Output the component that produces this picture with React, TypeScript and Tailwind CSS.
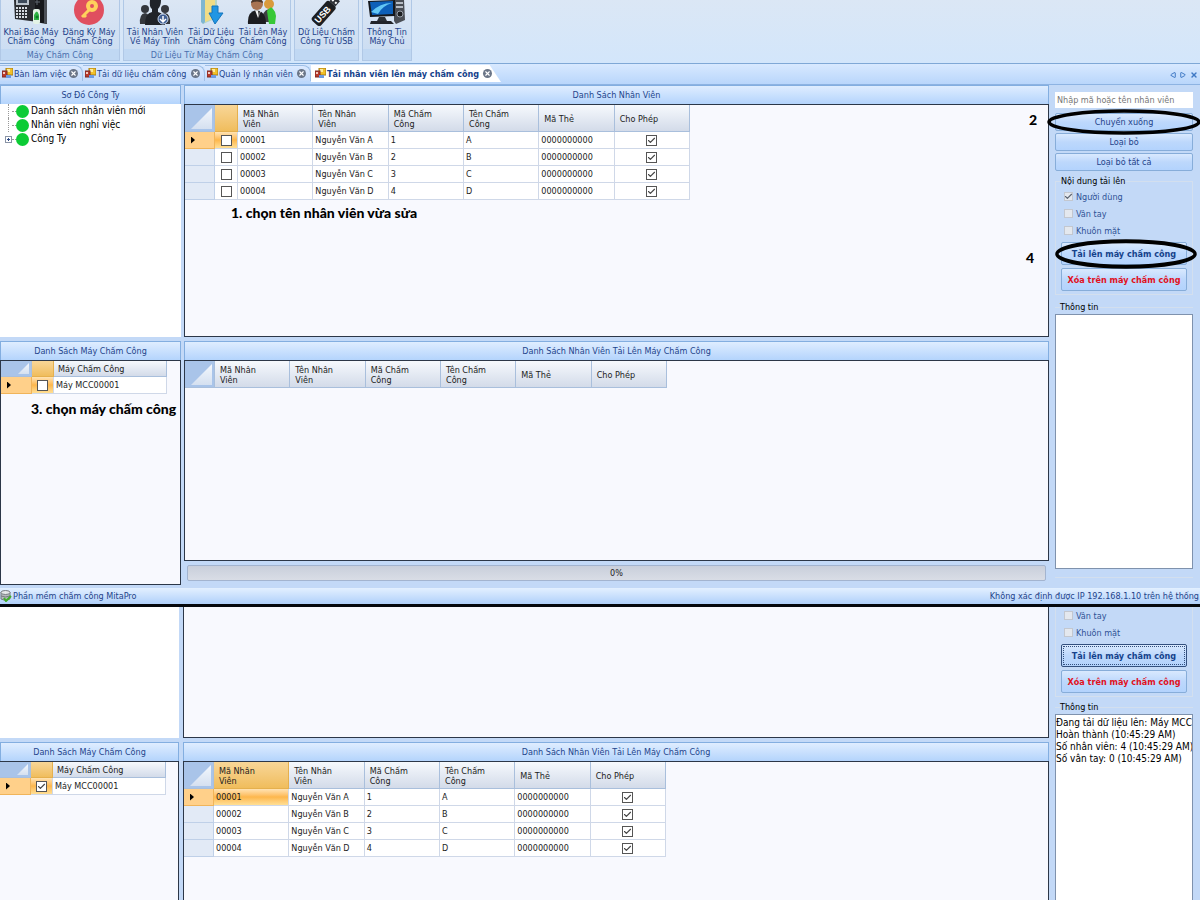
import React from 'react';
import clsx from 'clsx';
import { Check, X, Triangle } from 'lucide-react';

interface Employee {
  code: string;
  name: string;
  deviceId: string;
  deviceName: string;
  card: string;
}

const employees: Employee[] = [
  { code: '00001', name: 'Nguyễn Văn A', deviceId: '1', deviceName: 'A', card: '0000000000' },
  { code: '00002', name: 'Nguyễn Văn B', deviceId: '2', deviceName: 'B', card: '0000000000' },
  { code: '00003', name: 'Nguyễn Văn C', deviceId: '3', deviceName: 'C', card: '0000000000' },
  { code: '00004', name: 'Nguyễn Văn D', deviceId: '4', deviceName: 'D', card: '0000000000' },
];

const columns = ['Mã Nhân Viên', 'Tên Nhân Viên', 'Mã Chấm Công', 'Tên Chấm Công', 'Mã Thẻ', 'Cho Phép'];

const uploadLog = [
  'Đang tải dữ liệu lên: Máy MCC00001',
  'Hoàn thành (10:45:29 AM)',
  'Số nhân viên: 4 (10:45:29 AM)',
  'Số vân tay: 0 (10:45:29 AM)',
].join('\n');

/* ---------- Icons ---------- */

function DeviceIcon() {
  return (
    <svg width="36" height="26" viewBox="0 0 36 26">
      <path d="M1 0h24v22L2 19z" fill="#2a2d31" />
      <path d="M22 0h12v24l-12-2z" fill="#16181b" />
      <path d="M31 0h3v24l-3-1z" fill="#4b5057" />
      <path d="M3 0h13v5H3z" fill="#b9c2cb" />
      <path d="M5 0h9v3H5z" fill="#3c4a5a" />
      {[7, 10, 13, 16].map((y) =>
        [3, 6, 9, 12].map((x) => <rect key={`${x}-${y}`} x={x} y={y} width="2" height="2" fill="#d7dce2" />),
      )}
      <rect x="20" y="9" width="7" height="15" rx="2" fill="#e3f3e6" />
      <path d="M21 15q3-7 5 0v5h-5z" fill="#2fb344" />
      <circle cx="24" cy="17" r="1.5" fill="#0e7d29" />
      <path d="M22 2h5M24 0v5" stroke="#5e666f" />
    </svg>
  );
}

function KeyIcon() {
  return (
    <svg width="32" height="26" viewBox="0 0 32 26">
      <circle cx="16" cy="10" r="15" fill="#e04f5f" />
      <circle cx="19" cy="6" r="4" fill="none" stroke="#ffd15c" strokeWidth="4" />
      <path d="M16 10 9 17M10 14l3 3" stroke="#ffd15c" strokeWidth="3" fill="none" />
    </svg>
  );
}

function PeopleIcon() {
  return (
    <svg width="32" height="26" viewBox="0 0 32 26">
      <g fill="#34373d">
        <circle cx="6" cy="9" r="4" />
        <circle cx="26" cy="9" r="4" />
        <path d="M1 24q-1-10 5-11 5 0 6 11zM20 24q0-10 6-11 6 1 5 11z" />
      </g>
      <path d="M6 25q0-12 7-13V9q-3-2-2-9h11q0 6-3 9v3q7 1 7 13z" fill="#202329" />
      <circle cx="24" cy="19" r="5" fill="#3e5d92" stroke="#c8d8ef" />
      <path d="M24 16v6M21 19l3 3 3-3" stroke="#fff" strokeWidth="1.5" fill="none" />
    </svg>
  );
}

function FolderDownIcon() {
  return (
    <svg width="26" height="26" viewBox="0 0 26 26">
      <path d="M3 0h16v18L5 24z" fill="#b7d5c5" />
      <path d="M7 0h10v18l-10 4z" fill="#f0dc86" />
      <path d="M3 0h4v22l-2 2-2-2z" fill="#7fb6d1" />
      <path d="M14 6h6v7h5l-8 11-6-11h3z" fill="#2196e3" stroke="#1374bd" />
    </svg>
  );
}

function BusinessIcon() {
  return (
    <svg width="32" height="26" viewBox="0 0 32 26">
      <circle cx="22" cy="4" r="5" fill="#d99a3c" />
      <path d="M15 22q0-12 7-13 6 1 6 13z" fill="#3d3f42" />
      <circle cx="10" cy="4" r="6" fill="#a87352" />
      <path d="M4 3q0-4 6-4 6 0 6 4-6-3-12 0z" fill="#4b372a" />
      <path d="M1 24Q0 12 9 10q10 1 10 14z" fill="#1c1d20" />
      <path d="M8 10l3 8 3-7z" fill="#f3f3f3" />
      <path d="M11 11l1 7 1-7z" fill="#333" />
      <path d="M20 11q4-6 6-2 3 3 3 7l-1 8h-6l-1-6z" fill="#37c837" />
    </svg>
  );
}

function UsbIcon() {
  return (
    <svg width="32" height="26" viewBox="0 0 32 26">
      <g transform="rotate(-48 14 12)">
        <rect x="-1" y="6" width="26" height="12" rx="3" fill="#1d1f22" />
        <rect x="25" y="8" width="7" height="8" fill="#2e3136" />
        <rect x="27" y="9" width="2" height="2" fill="#fff" />
        <rect x="27" y="13" width="2" height="2" fill="#fff" />
        <text x="1" y="15" fontSize="9" fontWeight="700" fill="#fff" fontFamily="Liberation Sans, sans-serif">
          USB
        </text>
      </g>
    </svg>
  );
}

function ComputerIcon() {
  return (
    <svg width="38" height="26" viewBox="0 0 38 26">
      <path d="M26 0h10l1 20-9 4-2-3z" fill="#4a4e55" />
      <path d="M28 2h7v2h-7zM28 6h7v2h-7z" fill="#b6bcc4" />
      <circle cx="32" cy="14" r="3" fill="#1b1d20" stroke="#9aa1aa" />
      <path d="M0 1 27 0v16L2 17z" fill="#15181d" />
      <path d="M2 2 25 1v13L4 15z" fill="#0d5fb8" />
      <path d="M3 12q9-9 21-9-10 3-14 11z" fill="#63c7f5" />
      <path d="M11 17h6l2 4H9z" fill="#2c3036" />
      <path d="M3 21h20l3 3H2z" fill="#22252a" />
    </svg>
  );
}

function FormIcon() {
  return (
    <svg width="11" height="11" viewBox="0 0 11 11" className="shrink-0">
      <rect x="4" y="0" width="7" height="7" fill="#f2c029" stroke="#a37b16" />
      <rect x="5" y="1" width="3" height="3" fill="#fdeb9c" />
      <rect x="0" y="3" width="5" height="6" fill="#b93a2c" stroke="#7d2b25" />
      <rect x="1" y="4" width="2" height="2" fill="#f3c9c0" />
      <rect x="4" y="7" width="5" height="3" fill="#6d9ae0" />
    </svg>
  );
}

function DatabaseIcon() {
  return (
    <svg width="12" height="12" viewBox="0 0 12 12" className="shrink-0">
      <path d="M1 2v7q5 3 9 0V2z" fill="#b5b9bd" stroke="#777c81" />
      <ellipse cx="5.5" cy="2.5" rx="4.5" ry="2" fill="#e7e9eb" stroke="#777c81" />
      <path d="M1 6q4 2 9 0" stroke="#777c81" fill="none" />
      <path d="m4 8 2 3 5-5" stroke="#3fae2a" strokeWidth="2" fill="none" />
    </svg>
  );
}

/* ---------- Small controls ---------- */

function CheckBox({ checked, label, soft }: { checked?: boolean; label?: string; soft?: boolean }) {
  return (
    <span className="relative inline-flex shrink-0 align-middle">
      <input
        type="checkbox"
        defaultChecked={checked}
        aria-label={label}
        className={clsx(
          'peer appearance-none border',
          soft ? 'size-[9px] border-[#c3c7cf] bg-[#e4e8ee]' : 'size-[11px] border-[#555] bg-white',
        )}
      />
      <Check
        className={clsx(
          'pointer-events-none absolute inset-0 m-auto hidden size-[9px] peer-checked:block',
          soft ? 'text-[#5b6472]' : 'text-[#444]',
        )}
        strokeWidth={3}
      />
    </span>
  );
}

function PanelTitle({ children }: { children: React.ReactNode }) {
  return (
    <h2 className="h-[19px] shrink-0 border border-b-0 border-[#83aee0] bg-linear-to-b from-[#dfedff] to-[#b4d4fc] text-center leading-[19px] text-[#1f458c]">
      {children}
    </h2>
  );
}

function ActionButton({ children, className }: { children: React.ReactNode; className?: string }) {
  return (
    <button
      type="button"
      className={clsx(
        'flex w-full items-center justify-center rounded-xs border border-[#87add9] bg-linear-to-b from-[#d9e9fe] via-[#bdd8fc] to-[#b3d3fd] whitespace-nowrap',
        className,
      )}
    >
      {children}
    </button>
  );
}

/* ---------- Ribbon ---------- */

function RibbonButton({ icon, lines, className }: { icon: React.ReactNode; lines: [string, string]; className: string }) {
  return (
    <button type="button" className={clsx('flex flex-col items-center text-center leading-[9px] whitespace-nowrap', className)}>
      {icon}
      <span className="mt-0.5">
        {lines[0]}
        <br />
        {lines[1]}
      </span>
    </button>
  );
}

function RibbonGroup({ caption, children, className }: { caption?: string; children: React.ReactNode; className: string }) {
  return (
    <section className={clsx('flex flex-col border border-t-0 border-[#b0c8e6] bg-linear-to-b from-[#dbe6f4] to-[#c9dcf2]', className)}>
      <div className="flex flex-1 justify-center">{children}</div>
      <div className="h-[11px] bg-[#c0d8f3] text-center leading-[12px] text-[#4a6fae]">{caption}</div>
    </section>
  );
}

function Ribbon() {
  return (
    <header className="flex h-[63px] gap-[3px] bg-linear-to-b from-[#dbe7f5] to-[#d3e6fb] pb-0.5 text-[#1f438a]">
      <RibbonGroup caption="Máy Chấm Công" className="w-[120px]">
        <RibbonButton icon={<DeviceIcon />} lines={['Khai Báo Máy', 'Chấm Công']} className="w-[58px]" />
        <RibbonButton icon={<KeyIcon />} lines={['Đăng Ký Máy', 'Chấm Công']} className="w-[58px]" />
      </RibbonGroup>
      <RibbonGroup caption="Dữ Liệu Từ Máy Chấm Công" className="w-[168px]">
        <RibbonButton icon={<PeopleIcon />} lines={['Tải Nhân Viên', 'Về Máy Tính']} className="w-[60px]" />
        <RibbonButton icon={<FolderDownIcon />} lines={['Tải Dữ Liệu', 'Chấm Công']} className="w-[52px]" />
        <RibbonButton icon={<BusinessIcon />} lines={['Tải Lên Máy', 'Chấm Công']} className="w-[52px]" />
      </RibbonGroup>
      <RibbonGroup className="w-[65px]">
        <RibbonButton icon={<UsbIcon />} lines={['Dữ Liệu Chấm', 'Công Từ USB']} className="w-full" />
      </RibbonGroup>
      <RibbonGroup className="w-[50px]">
        <RibbonButton icon={<ComputerIcon />} lines={['Thông Tin', 'Máy Chủ']} className="w-full" />
      </RibbonGroup>
    </header>
  );
}

/* ---------- Document tabs ---------- */

const tabs = [
  { title: 'Bàn làm việc', width: 'w-[83px]' },
  { title: 'Tải dữ liệu chấm công', width: 'w-[122px]' },
  { title: 'Quản lý nhân viên', width: 'w-[106px]' },
];

function TabClose() {
  return (
    <span className="flex size-[9px] shrink-0 items-center justify-center rounded-full bg-[#6b7688] text-white">
      <X size={7} strokeWidth={4} />
    </span>
  );
}

function TabBar() {
  return (
    <nav className="flex h-[22px] border-y border-t-[#7fa8d6] border-b-[#8db3e2] bg-linear-to-b from-[#d8e9ff] to-[#b9d6fb] pt-px text-[#1d448c]">
      {tabs.map((tab) => (
        <button
          key={tab.title}
          type="button"
          className={clsx(
            'flex h-4 items-center gap-px rounded-tr-lg border-t border-r border-[#9fbfe6] bg-linear-to-b from-[#dceaff] to-[#c3dafa] pr-1 pl-0.5 whitespace-nowrap',
            tab.width,
          )}
        >
          <FormIcon />
          <span className="mr-auto">{tab.title}</span>
          <TabClose />
        </button>
      ))}
      <button
        type="button"
        className="flex h-[17px] w-[190px] items-center gap-px bg-white pl-1 font-bold whitespace-nowrap text-[#15428b] [clip-path:polygon(0_0,94%_0,100%_100%,0_100%)]"
      >
        <FormIcon />
        <span className="mr-[3px]">Tải nhân viên lên máy chấm công</span>
        <TabClose />
      </button>
      <div className="ml-auto flex items-center gap-1 pr-0.5 text-[#3f78c4]">
        <button type="button" aria-label="Tab trước">
          <Triangle size={6} strokeWidth={4} className="-rotate-90" />
        </button>
        <button type="button" aria-label="Tab sau">
          <Triangle size={6} strokeWidth={4} className="rotate-90" />
        </button>
        <button type="button" aria-label="Đóng tab">
          <X size={8} strokeWidth={4} />
        </button>
      </div>
    </nav>
  );
}

/* ---------- Grids ---------- */

const headCell = 'border-r border-b border-[#a9bfdc] bg-linear-to-b from-[#f6f9fd] to-[#d3dbe9] text-left font-normal';
const headCellActive = 'border-r border-b border-[#e5b04e] bg-linear-to-b from-[#f8d697] to-[#f0bd5c] text-left font-normal';
const bodyCell = 'border-r border-b border-[#cfd8e8] bg-white whitespace-nowrap';
const activeCell = 'border-r border-b border-[#cfd8e8] bg-linear-to-b from-[#ffe3b3] via-[#fdb74b] to-[#ffdf94] whitespace-nowrap';

function CornerCell({ small }: { small?: boolean }) {
  return (
    <th className="border-r border-b border-[#a9bfdc] bg-[#a9c4e9] p-0.5 align-bottom">
      <div
        className={clsx(
          'ml-auto bg-linear-to-b from-[#f4f8fd] to-[#d5e0f0] [clip-path:polygon(100%_0,100%_100%,0_100%)]',
          small ? 'h-[11px] w-[11px]' : 'h-[21px] w-[21px]',
        )}
      />
    </th>
  );
}

function RowHeader({ active }: { active: boolean }) {
  return (
    <td
      className={clsx(
        'border-r border-b pl-1.5',
        active ? 'border-[#f0b45a] bg-[#ffd08a]' : 'border-[#bfd0e8] bg-[#e2eaf6]',
      )}
    >
      {active && <div className="h-[7px] w-1 bg-black [clip-path:polygon(0_0,100%_50%,0_100%)]" />}
    </td>
  );
}

function EmployeeGrid({ rows, selectable }: { rows: Employee[]; selectable?: boolean }) {
  const highlightCode = !selectable && rows.length > 0;
  return (
    <table className={clsx('table-fixed border-separate border-spacing-0', selectable ? 'w-[505px]' : 'w-[482px]')}>
      <colgroup>
        <col className="w-[30px]" />
        {selectable && <col className="w-[23px]" />}
        {columns.map((c) => (
          <col key={c} />
        ))}
      </colgroup>
      <thead>
        <tr className="h-[27px]">
          <CornerCell />
          {selectable && <th className={headCellActive} />}
          {columns.map((c, i) => (
            <th key={c} className={clsx('pt-0.5 pr-6 pl-[5px] leading-[10px]', i > 3 && 'whitespace-nowrap', i === 0 && highlightCode ? headCellActive : headCell)}>
              {c}
            </th>
          ))}
        </tr>
      </thead>
      <tbody>
        {rows.map((row, i) => (
          <tr key={row.code} className="h-[17px]">
            <RowHeader active={i === 0} />
            {selectable && (
              <td className={clsx('text-center leading-3', i === 0 ? activeCell : bodyCell)}>
                <CheckBox label={`Chọn ${row.name}`} />
              </td>
            )}
            <td className={clsx('pl-0.5 leading-3', i === 0 && highlightCode ? activeCell : bodyCell)}>{row.code}</td>
            <td className={clsx('pl-0.5 leading-3', bodyCell)}>{row.name}</td>
            <td className={clsx('pl-0.5 leading-3', bodyCell)}>{row.deviceId}</td>
            <td className={clsx('pl-0.5 leading-3', bodyCell)}>{row.deviceName}</td>
            <td className={clsx('pl-0.5 leading-3', bodyCell)}>{row.card}</td>
            <td className={clsx('text-center leading-3', bodyCell)}>
              <CheckBox checked label={`Cho phép ${row.name}`} />
            </td>
          </tr>
        ))}
      </tbody>
    </table>
  );
}

function MachineGrid({ checked }: { checked?: boolean }) {
  return (
    <table className="w-[166px] table-fixed border-separate border-spacing-0">
      <colgroup>
        <col className="w-[31px]" />
        <col className="w-[22px]" />
        <col />
      </colgroup>
      <thead>
        <tr className="h-4">
          <CornerCell small />
          <th className={headCellActive} />
          <th className={clsx('pl-1 leading-3', headCell)}>Máy Chấm Công</th>
        </tr>
      </thead>
      <tbody>
        <tr className="h-[17px]">
          <RowHeader active />
          <td className={clsx('text-center leading-3', activeCell)}>
            <CheckBox checked={checked} label="Chọn Máy MCC00001" />
          </td>
          <td className={clsx('pl-0.5 leading-3', bodyCell)}>Máy MCC00001</td>
        </tr>
      </tbody>
    </table>
  );
}

/* ---------- Panels ---------- */

const gridBody = 'border border-[#2c3748] bg-[#f8f9fe]';

function CompanyTree() {
  return (
    <ul className="h-[233px] bg-white text-[10px] text-black">
      {['Danh sách nhân viên mới', 'Nhân viên nghỉ việc', 'Công Ty'].map((label, i) => (
        <li key={label} className="flex h-[14px] items-center pl-[5px]">
          {i === 2 ? (
            <button type="button" aria-label="Mở rộng" className="flex size-[7px] items-center justify-center border border-[#8a94a6] bg-white text-[#2c4a86]">
              <svg width="5" height="5" viewBox="0 0 5 5" className="shrink-0">
                <path d="M1 2.5h3M2.5 1v3" stroke="currentColor" />
              </svg>
            </button>
          ) : (
            <span className="ml-[3px] h-full w-1 border-l border-dotted border-[#999]" />
          )}
          <span className="w-1 border-t border-dotted border-[#999]" />
          <span className="mr-0.5 size-[13px] rounded-full bg-[#0ccb35]" />
          {label}
        </li>
      ))}
    </ul>
  );
}

function OptionRow({ label, checked }: { label: string; checked?: boolean }) {
  return (
    <label className="flex h-[17px] items-center gap-[3px] pl-[3px] text-[#2f5296]">
      <CheckBox soft checked={checked} />
      {label}
    </label>
  );
}

function UploadButtons({ focused }: { focused?: boolean }) {
  return (
    <div className="mt-[3px] flex flex-col gap-[3px] font-bold">
      <ActionButton className={clsx('h-[23px] text-[#15428b]', focused && 'border-[#33507e] outline-1 -outline-offset-3 outline-dotted outline-[#33507e]')}>
        Tải lên máy chấm công
      </ActionButton>
      <ActionButton className="h-[23px] text-[#e0111d]">Xóa trên máy chấm công</ActionButton>
    </div>
  );
}

function InfoBox({ log, className }: { log?: string; className: string }) {
  return (
    <textarea
      readOnly
      aria-label="Thông tin"
      wrap="off"
      defaultValue={log}
      className={clsx('block w-full resize-none overflow-hidden border border-[#7f92ad] bg-white text-[10px] leading-3 text-black', className)}
    />
  );
}

function Annotation({ children, className }: { children: React.ReactNode; className: string }) {
  return (
    <p className={clsx("pointer-events-none absolute font-['Lato','Noto_Sans',sans-serif] text-[14px] leading-4 font-black whitespace-nowrap text-black", className)}>
      {children}
    </p>
  );
}

function Ring({ className }: { className: string }) {
  return (
    <svg viewBox="0 0 150 26" preserveAspectRatio="none" className={clsx('pointer-events-none absolute', className)}>
      <ellipse cx="75" cy="13" rx="73" ry="11" fill="none" stroke="#000" strokeWidth="3.5" />
    </svg>
  );
}

function StatusBar() {
  return (
    <footer className="flex h-4 items-center gap-px bg-linear-to-b from-[#e3f0ff] to-[#b0d0fa] pr-px text-[#1f438a]">
      <DatabaseIcon />
      <span>Phần mềm chấm công MitaPro</span>
      <span className="ml-auto">Không xác định được IP 192.168.1.10 trên hệ thống</span>
    </footer>
  );
}

function SelectionScreen() {
  return (
    <main className="flex">
      <div className="flex w-[181px] shrink-0 flex-col pb-[3px]">
        <PanelTitle>Sơ Đồ Công Ty</PanelTitle>
        <CompanyTree />
        <div className="mt-1 flex flex-1 flex-col">
          <PanelTitle>Danh Sách Máy Chấm Công</PanelTitle>
          <div className={clsx('relative flex-1', gridBody)}>
            <MachineGrid />
            <Annotation className="top-10 left-[30px]">3. chọn máy chấm công</Annotation>
          </div>
        </div>
      </div>

      <div className="ml-[3px] flex min-w-0 flex-1 flex-col pb-[7px]">
        <PanelTitle>Danh Sách Nhân Viên</PanelTitle>
        <div className={clsx('relative h-[233px]', gridBody)}>
          <EmployeeGrid rows={employees} selectable />
          <Annotation className="top-[100px] left-[46px]">1. chọn tên nhân viên vừa sửa</Annotation>
          <Annotation className="top-[7px] right-[11px]">2</Annotation>
          <Annotation className="top-[145px] right-[14px]">4</Annotation>
        </div>
        <div className="mt-1">
          <PanelTitle>Danh Sách Nhân Viên Tải Lên Máy Chấm Công</PanelTitle>
          <div className={clsx('h-[201px]', gridBody)}>
            <EmployeeGrid rows={[]} />
          </div>
        </div>
        <div
          role="progressbar"
          aria-valuenow={0}
          className="mx-[3px] mt-1 h-4 rounded-xs border border-[#a3b4cf] bg-linear-to-b from-[#c9cfdb] to-[#d9dde6] text-center leading-[14px] text-[#222]"
        >
          0%
        </div>
      </div>

      <aside className="flex w-[151px] shrink-0 flex-col pt-[7px] pr-[7px] pb-2 pl-1.5">
        <input
          type="text"
          aria-label="Tìm nhân viên"
          placeholder="Nhập mã hoặc tên nhân viên"
          className="h-4 w-full bg-white px-0.5 placeholder:text-[#777]"
        />
        <div className="mt-[5px] flex flex-col gap-0.5 text-[#1f438a]">
          <div className="relative">
            <ActionButton className="h-[18px]">Chuyển xuống</ActionButton>
            <Ring className="-top-1 -left-2 h-[26px] w-[154px]" />
          </div>
          <ActionButton className="h-[18px]">Loại bỏ</ActionButton>
          <ActionButton className="h-[18px]">Loại bỏ tất cả</ActionButton>
        </div>
        <fieldset className="relative mt-1 border border-[#d3dfee] px-[5px] pt-px pb-[3px]">
          <legend className="leading-3 text-black">Nội dung tải lên</legend>
          <OptionRow label="Người dùng" checked />
          <OptionRow label="Vân tay" />
          <OptionRow label="Khuôn mặt" />
          <UploadButtons />
          <Ring className="-left-px bottom-[25px] h-[30px] w-[142px]" />
        </fieldset>
        <fieldset className="mt-1.5 border-y border-[#d3dfee] pt-px pb-2">
          <legend className="ml-[5px] leading-3 text-black">Thông tin</legend>
          <InfoBox className="h-[255px]" />
        </fieldset>
      </aside>
    </main>
  );
}

function ResultScreen() {
  return (
    <main className="flex flex-1">
      <div className="flex w-[179px] shrink-0 flex-col">
        <div className="h-[131px] bg-white" />
        <div className="mt-1 flex flex-1 flex-col">
          <PanelTitle>Danh Sách Máy Chấm Công</PanelTitle>
          <div className={clsx('flex-1 border-b-0 border-l-0', gridBody)}>
            <MachineGrid checked />
          </div>
        </div>
      </div>

      <div className="ml-1 flex min-w-0 flex-1 flex-col">
        <div className={clsx('h-[131px] border-t-0', gridBody)} />
        <div className="mt-1 flex flex-1 flex-col">
          <PanelTitle>Danh Sách Nhân Viên Tải Lên Máy Chấm Công</PanelTitle>
          <div className={clsx('flex-1 border-b-0', gridBody)}>
            <EmployeeGrid rows={employees} />
          </div>
        </div>
      </div>

      <aside className="flex w-[151px] shrink-0 flex-col pr-[7px] pl-1.5">
        <fieldset className="border border-t-0 border-[#d3dfee] px-[5px] pb-[3px]">
          <OptionRow label="Vân tay" />
          <OptionRow label="Khuôn mặt" />
          <UploadButtons focused />
        </fieldset>
        <fieldset className="mt-1 flex flex-1 flex-col border-t border-[#d3dfee] pt-px">
          <legend className="ml-[5px] leading-3 text-black">Thông tin</legend>
          <InfoBox log={uploadLog} className="flex-1 border-b-0 pt-0.5" />
        </fieldset>
      </aside>
    </main>
  );
}

export default function App() {
  return (
    <div className="flex min-h-screen flex-col overflow-hidden bg-[#c3d9f7] font-['DejaVu_Sans_Condensed','DejaVu_Sans',sans-serif] text-[9px] leading-3 text-[#1c1c1c]">
      <Ribbon />
      <TabBar />
      <SelectionScreen />
      <StatusBar />
      <div className="h-[3px] bg-[#05080d]" />
      <ResultScreen />
    </div>
  );
}
